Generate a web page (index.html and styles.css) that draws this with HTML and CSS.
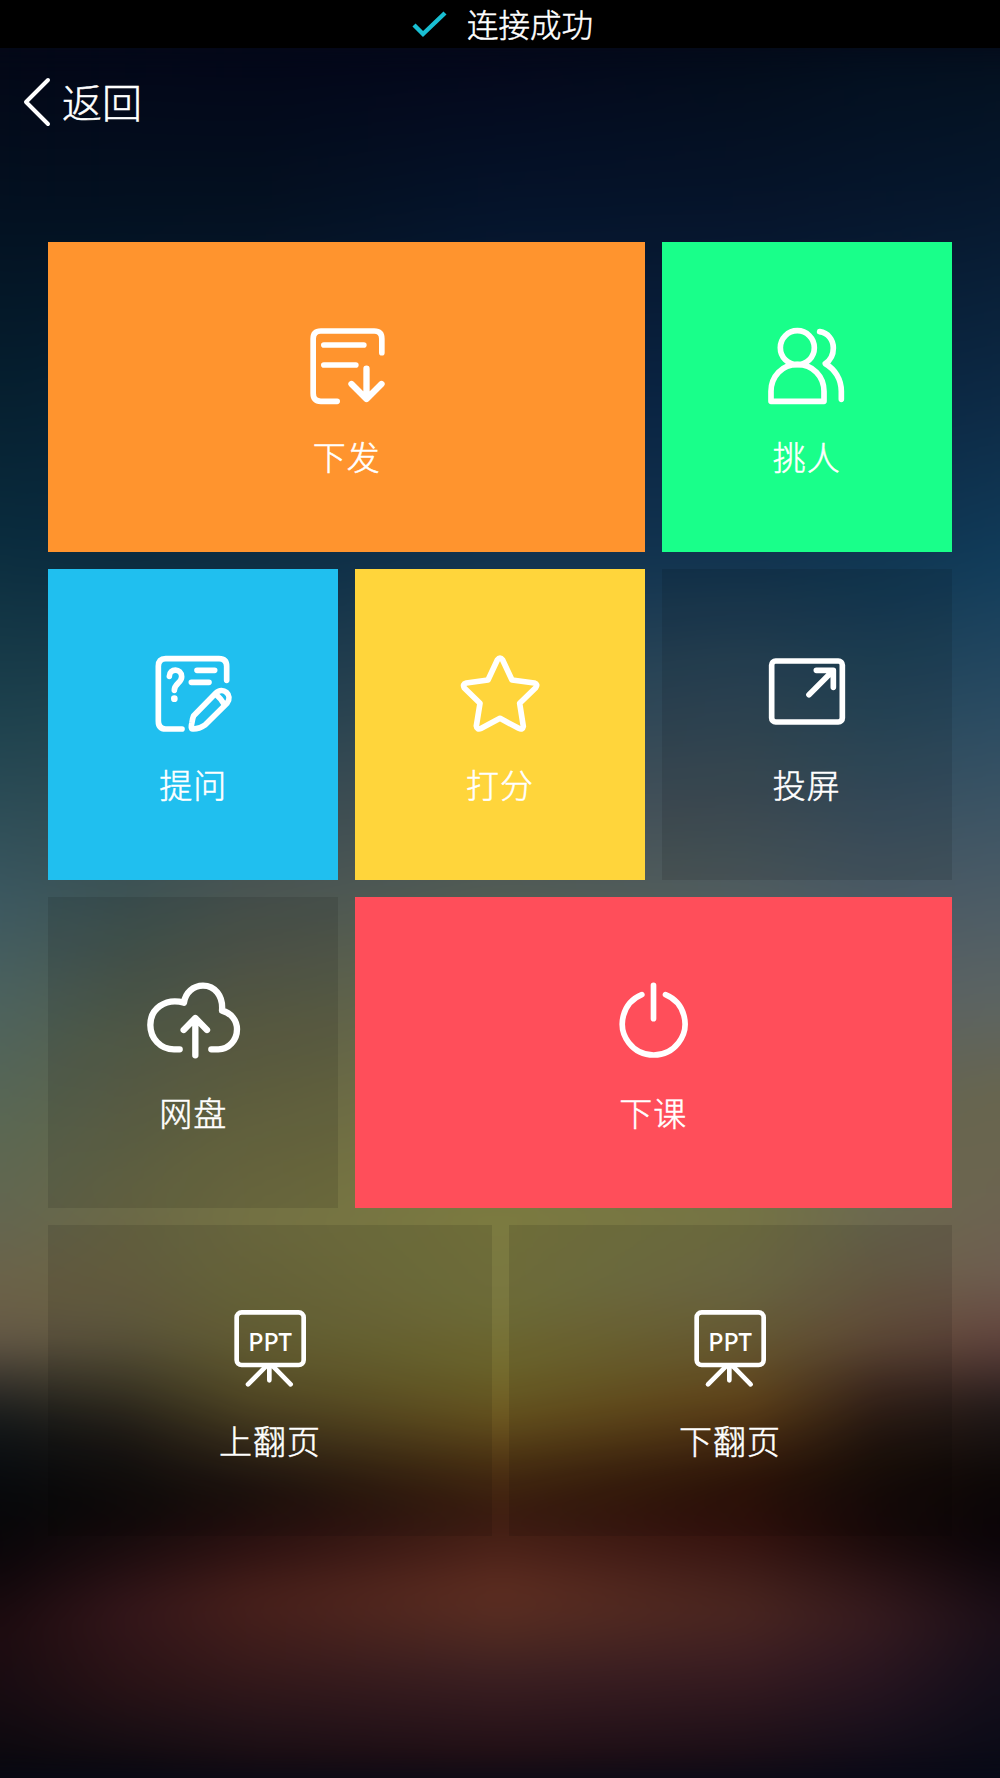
FILE: index.html
```html
<!DOCTYPE html>
<html lang="zh-CN">
<head>
    <meta charset="UTF-8">
    <title>连接成功</title>
    <link rel="stylesheet" href="styles.css">
</head>
<body>
    <!-- Status bar -->
    <div class="status-bar">
        <svg class="check" viewBox="0 0 36 28"><path d="M2 15 L11 24 L33 3"/></svg>
        <span>连接成功</span>
    </div>

    <div class="page">
        <!-- Blurred wallpaper, one gradient per column -->
        <div class="wallpaper">
            <div class="col c0"></div>
            <div class="col c1"></div>
            <div class="col c2"></div>
            <div class="col c3"></div>
            <div class="col c4"></div>
            <div class="col c5"></div>
            <div class="col c6"></div>
        </div>

        <div class="back">
            <svg class="arrow" viewBox="0 0 28 50"><path d="M25 3 L3 25 L25 47"/></svg>
            <span>返回</span>
        </div>

        <div class="tiles">
            <div class="tile wide orange">
                <svg class="icon" viewBox="55.5 75 288 240">
                    <path d="M304 155 V113 Q304 90 281 90 H121 Q98 90 98 113 V277 Q98 301 121 301 H170"/>
                    <path d="M130 132 H250 M130 192 H226"/>
                    <path class="bold" d="M258 203 V292 M213 249 L258 294 L303 249"/>
                </svg>
                <span class="label">下发</span>
            </div>
            <div class="tile green">
                <svg class="icon" viewBox="57 75 288 240">
                    <circle cx="172" cy="140" r="51"/>
                    <path d="M93 301 V271 C93 226 127 190 172 190 C218 190 252 226 252 271 V301 Z"/>
                    <path d="M239 92 C264 96 280 116 280 141 C280 161 271 178 256 188 C284 204 304 234 304 271 V295"/>
                </svg>
                <span class="label">挑人</span>
            </div>

            <div class="tile blue">
                <svg class="icon" viewBox="45 70 288 240">
                    <path d="M290 149 V107 Q290 84 267 84 H107 Q85 84 85 107 V271 Q85 295 107 295 H156"/>
                    <path d="M201 119 H254 M184 155 H237"/>
                    <path d="M118 137 C118 112 155 112 155 138 C155 157 133 158 133 179"/>
                    <circle class="solid" cx="133" cy="204" r="10"/>
                    <path d="M191 255 L257 188 C279 165 310 194 291 218 L225 283 Q206 296 188 295 Q181 295 186 275 Q188 262 191 255 Z"/>
                    <path d="M258 191 Q272 203 282 220"/>
                </svg>
                <span class="label">提问</span>
            </div>
            <div class="tile yellow">
                <svg class="icon" viewBox="66 70 288 240">
                    <path d="M202 88 Q210 77 218 88 L246 148 L313 157 Q325 161 317 171 L269 218 L280 287 Q278 299 266 293 L210 263 L154 293 Q140 298 139 286 L150 218 L103 172 Q96 160 109 157 L174 148 Z"/>
                </svg>
                <span class="label">打分</span>
            </div>
            <div class="tile dim">
                <svg class="icon" viewBox="57 70 288 240">
                    <rect x="95" y="91" width="212" height="183" rx="12"/>
                    <path d="M207 192 L278 121 M229 119 H280 V170"/>
                </svg>
                <span class="label">投屏</span>
            </div>

            <div class="tile dim">
                <svg class="icon" viewBox="45 65 288 240">
                    <path class="bold" d="M149 267 H132 C91 267 61 234 61 194 C61 146 105 112 162 127 C166 97 190 76 219 76 C254 76 280 106 276 151 C304 158 321 181 321 207 C321 240 296 267 265 267 H244"/>
                    <path class="bold" d="M196 285 V175 M161 209 L196 173 L231 209"/>
                </svg>
                <span class="label">网盘</span>
            </div>
            <div class="tile wide red">
                <svg class="icon" viewBox="76.5 65 288 240">
                    <path d="M187 103 A94 94 0 1 0 258 103 M222 75 V175"/>
                </svg>
                <span class="label">下课</span>
            </div>

            <div class="tile half dim">
                <svg class="icon" viewBox="65 59 288 240">
                    <rect class="thin" x="109" y="66" width="201" height="158" rx="15"/>
                    <path class="thin" d="M196 229 L143 282 M219 229 L271 282 M207 229 V270"/>
                    <text x="210" y="183" textLength="132" lengthAdjust="spacingAndGlyphs">PPT</text>
                </svg>
                <span class="label">上翻页</span>
            </div>
            <div class="tile half dim">
                <svg class="icon" viewBox="65 59 288 240">
                    <rect class="thin" x="109" y="66" width="201" height="158" rx="15"/>
                    <path class="thin" d="M196 229 L143 282 M219 229 L271 282 M207 229 V270"/>
                    <text x="210" y="183" textLength="132" lengthAdjust="spacingAndGlyphs">PPT</text>
                </svg>
                <span class="label">下翻页</span>
            </div>
        </div>
    </div>
</body>
</html>
```

FILE: styles.css
```css
* { box-sizing: border-box; }
body { margin: 0; background-color: #000; color: #fff; font-family: "Noto Sans CJK SC", sans-serif; font-weight: 300; -webkit-text-stroke: 0.5px #fff; }
svg { display: block; fill: none; stroke: #fff; stroke-linecap: round; stroke-linejoin: round; }

.status-bar { height: 48px; display: flex; align-items: center; justify-content: center; gap: 19px; padding-left: 5px; font-size: 31.5px; line-height: 44px; background: #000; }
.status-bar span { padding-bottom: 3px; }
.check { width: 36px; height: 28px; stroke: #19bfd3; stroke-width: 4.4; stroke-linecap: butt; stroke-linejoin: miter; }

.page { position: relative; height: 1730px; overflow: hidden; background: #050918; }
.back { position: relative; display: flex; align-items: center; gap: 11px; height: 60px; margin-top: 24px; padding-left: 23px; font-size: 40px; }
.back span { padding-bottom: 3px; }
.arrow { width: 28px; height: 50px; stroke-width: 4; }

/* Tiles */
.tiles { position: relative; display: grid; grid-template-columns: repeat(6, 1fr); grid-auto-rows: 310.9px; gap: 17px; margin: 109.5px 48.4px 0; }
.tile { grid-column: span 2; display: flex; flex-direction: column; align-items: center; padding-top: 84.4px; }
.wide { grid-column: span 4; }
.half { grid-column: span 3; }
.orange { background: #ff942e; }
.green { background: #19ff8a; }
.blue { background: #20bfef; }
.yellow { background: #ffd53b; }
.red { background: #ff4e5a; }
.dim { background: rgba(0,0,0,0.1); }

.icon { width: 96px; height: 80px; stroke-width: 17; overflow: visible; }
.icon .bold { stroke-width: 19; }
.icon .thin { stroke-width: 14; }
.icon .solid { fill: #fff; stroke: none; }
.icon text { fill: #fff; stroke: none; -webkit-text-stroke: 0; font-family: "Noto Sans CJK SC", sans-serif; font-size: 74px; font-weight: 500; text-anchor: middle; }
.label { margin-top: 30.5px; font-size: 33px; line-height: 40px; letter-spacing: 1px; }

/* Wallpaper */
.wallpaper { position: absolute; inset: 0 -60px; filter: blur(16px); }
.col { position: absolute; inset: 0; }
.c0 { background: linear-gradient(#030716, #031020 152px, #062030 352px, #0a2c3e 492px, #1e424e 672px, #3c5860 852px, #4c625e 952px, #5c6852 1092px, #646650 1172px, #6c6248 1242px, #645846 1292px, #33302a 1338px, #141819 1374px, #0a0d10 1416px, #060709 1462px, #0c060a 1512px, #1e0c10 1582px, #180c12 1642px, #08080e); }
.c1 { background: linear-gradient(#030718, #031020 152px, #072236 352px, #0b2c40 512px, #23444e 672px, #3d5355 842px, #5a624c 1002px, #6a6a48 1142px, #6d6644 1232px, #665e42 1286px, #443e2a 1336px, #241f19 1378px, #15110f 1416px, #0f0b0b 1462px, #1c0c0e 1502px, #34161a 1562px, #2a1316 1632px, #180e14 1690px, #09080e); }
.c2 { background: linear-gradient(#030618, #041020 152px, #0a2038 352px, #0d2e44 512px, #2c4650 692px, #4a5553 842px, #5f6148 972px, #706e43 1112px, #747244 1172px, #706c3e 1252px, #6b6436 1302px, #5a4f28 1352px, #35291a 1402px, #1c110d 1442px, #2a1010 1492px, #48201b 1552px, #3a1b1b 1612px, #221218 1682px, #120a10); }
.c3 { background: linear-gradient(#04071a, #05132a 152px, #0a2440 352px, #123450 512px, #2c4454 652px, #454f55 762px, #525c55 842px, #727044 1052px, #7c7b40 1167px, #7a7840 1252px, #756d2e 1322px, #6e5820 1372px, #4c3012 1422px, #3e1e10 1462px, #4c2219 1502px, #5e2e21 1542px, #522b22 1582px, #3c2022 1627px, #2a141a 1682px, #180c12); }
.c4 { background: linear-gradient(#030c1a, #06142a 152px, #0a2444 352px, #123450 512px, #2a4658 622px, #40505a 752px, #4f5c60 842px, #6c6c4a 1052px, #757444 1167px, #74704a 1232px, #705f34 1302px, #6a4a1c 1352px, #442610 1402px, #2e1409 1432px, #32100c 1482px, #3e1c18 1522px, #4a2620 1562px, #3c1e22 1612px, #23121a 1682px, #120b14); }
.c5 { background: linear-gradient(#030f1e, #06162c 152px, #0b2744 352px, #103753 512px, #26485c 652px, #445663 812px, #586064 932px, #6a684e 1102px, #6c6a50 1172px, #6e6048 1232px, #68503c 1292px, #402a20 1342px, #22150e 1392px, #170c08 1442px, #1a0a0a 1492px, #2c1416 1532px, #361b1f 1572px, #281520 1632px, #140e1a 1702px, #0c0914); }
.c6 { background: linear-gradient(#04101e, #06182e 152px, #0d2a45 352px, #113c5a 512px, #2c4c62 672px, #4c5c66 852px, #5c6462 952px, #68654e 1052px, #6c6450 1152px, #6e5e50 1222px, #654840 1282px, #4a3330 1318px, #221a19 1358px, #0c0706 1432px, #0a0408 1492px, #1c0f18 1572px, #140e1a 1632px, #080a16); }

.c1 { mask-image: linear-gradient(90deg, transparent 60px, #000 185px); }
.c2 { mask-image: linear-gradient(90deg, transparent 185px, #000 310px); }
.c3 { mask-image: linear-gradient(90deg, transparent 310px, #000 560px); }
.c4 { mask-image: linear-gradient(90deg, transparent 560px, #000 810px); }
.c5 { mask-image: linear-gradient(90deg, transparent 810px, #000 935px); }
.c6 { mask-image: linear-gradient(90deg, transparent 935px, #000 1060px); }
```
